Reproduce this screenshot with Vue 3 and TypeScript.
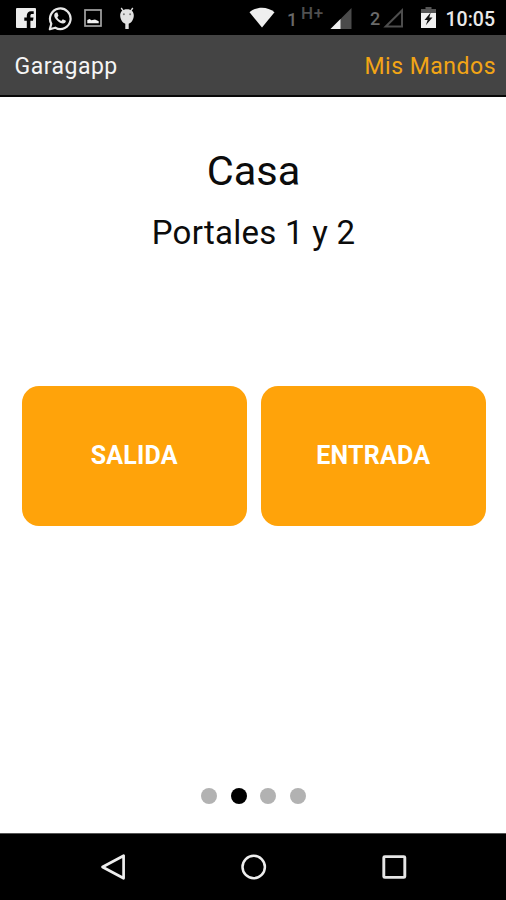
<script setup lang="ts">
import { ref } from 'vue'

const title = 'Casa'
const subtitle = 'Portales 1 y 2'
const actions: string[] = ['SALIDA', 'ENTRADA']
const pageCount = 4
const currentPage = ref(2)
</script>

<template>
  <div class="phone">
    <div class="status">
      <svg class="facebook" width="20" height="20" viewBox="0 0 20 20">
        <rect width="20" height="20" rx="1" fill="#ececec" />
        <path d="M10.800 20v-7.200H8.300V9.600h2.500V7.800c0-2.900 1.600-4.600 4.200-4.600h2.700v2.900h-1.600c-1.200 0-1.700.6-1.700 1.600v1.900h3.100l-.5 3.200h-2.600V20z" fill="#000" />
      </svg>
      <svg class="whatsapp" width="24" height="25" viewBox="0 0 24 25">
        <path d="M1.800 23.300l1.500-5.600A10.300 10.300 0 1 1 7.300 21.700z" fill="none" stroke="#e8e8e8" stroke-width="2.200" stroke-linejoin="round" />
        <path d="M8.300 6.500c-.8 0-2.100 1.100-2.100 2.900 0 2.800 5.200 8.100 8.800 8.100 1.500 0 3-1.100 2.900-2.700l-3.100-1.600-1.500 1.700c-1.700-.6-3.300-2-4-3.700l1.200-1.400-1.100-3.200z" fill="#e8e8e8" />
      </svg>
      <svg class="picture" width="18" height="18" viewBox="0 0 18 18">
        <rect x="1" y="1" width="16" height="16" fill="none" stroke="#a4a4a4" stroke-width="1.700" />
        <path d="M3.300 14.300v-3.400l2.300-.8 1.800 1.100 3.600-.8 3.700 1.900v2z" fill="#f2f2f2" />
      </svg>
      <svg class="debug" width="16" height="23" viewBox="0 0 16 23">
        <path d="M2.200 1l2.200 3.100M13.800 1l-2.200 3.100" stroke="#ddd" stroke-width="1.400" />
        <path d="M8 2.200c4.500 0 7 2.700 6.800 6.500C14.600 12.500 12.300 16 9.700 16.700V22H6.300v-5.300C3.700 16 1.400 12.500 1.200 8.700 1 4.900 3.500 2.200 8 2.200z" fill="#e2e2e2" />
        <circle cx="4.900" cy="7.300" r="1" fill="#777" />
        <circle cx="11.100" cy="7.300" r="1" fill="#777" />
      </svg>
      <svg class="wifi" width="26" height="21" viewBox="0 0 26 21">
        <path d="M.5 5.200C7.500-.9 18.500-.9 25.500 5.200L13 20.500z" fill="#efefef" />
      </svg>
      <span class="sim one">1</span>
      <span class="network">H+</span>
      <svg class="signal" width="22" height="21" viewBox="0 0 22 21">
        <path d="M21.500 0v21H.5z" fill="#4b4b4b" />
        <path d="M10.500 11v10H.5z" fill="#f0f0f0" />
      </svg>
      <span class="sim two">2</span>
      <svg class="empty" width="21" height="20" viewBox="0 0 21 20">
        <path d="M19 2.500v16H2.700z" fill="none" stroke="#4d4d4d" stroke-width="2" />
      </svg>
      <svg class="battery" width="15" height="21" viewBox="0 0 15 21">
        <path d="M4.500 0h6v2H15v4H0V2h4.500z" fill="#555" />
        <path d="M0 6h15v15H0z" fill="#f0f0f0" />
        <path d="M9.700 5.500L3.500 13h3.200L4.800 18.200l6.700-7.700H8.300z" fill="#111" />
      </svg>
      <time class="clock">10:05</time>
    </div>

    <header class="bar">
      <span class="brand">Garagapp</span>
      <a class="link">Mis Mandos</a>
    </header>

    <main class="content">
      <h1 class="title">{{ title }}</h1>
      <h2 class="subtitle">{{ subtitle }}</h2>
      <div class="actions">
        <button v-for="label in actions" :key="label" class="action" type="button">{{ label }}</button>
      </div>
      <div class="dots">
        <i v-for="n in pageCount" :key="n" class="dot" :class="{ active: n === currentPage }" @click="currentPage = n"></i>
      </div>
    </main>

    <nav class="nav">
      <svg width="26" height="28" viewBox="0 0 26 28">
        <path d="M23.600 2.700v22.600L2.500 14z" fill="none" stroke="#eee" stroke-width="2.700" stroke-linejoin="round" />
      </svg>
      <svg width="26" height="28" viewBox="0 0 26 28">
        <circle cx="12.700" cy="14" r="11.200" fill="none" stroke="#eee" stroke-width="2.500" />
      </svg>
      <svg width="26" height="28" viewBox="0 0 26 28">
        <rect x="2.800" y="3.600" width="21" height="20.800" rx="1" fill="none" stroke="#e6e6e6" stroke-width="2.900" />
      </svg>
    </nav>
  </div>
</template>

<style>
body {
  margin: 0;
  background: #fff;
}
</style>

<style scoped>
.phone {
  width: 506px;
  height: 900px;
  display: flex;
  flex-direction: column;
  overflow: hidden;
  font-family: Roboto, "Liberation Sans", sans-serif;
  background: #fff;
}
.status {
  height: 35px;
  flex: none;
  display: flex;
  align-items: flex-start;
  background: #000;
}
.status > * {
  flex: none;
}
.facebook { margin: 8px 0 0 16px; }
.whatsapp { margin: 6px 0 0 11.500px; }
.picture { margin: 9px 0 0 12.500px; }
.debug { margin: 7px 0 0 17px; }
.wifi { margin: 7px 0 0 114px; }
.sim {
  width: 12px;
  font-size: 18px;
  font-weight: 500;
  line-height: 20px;
  color: #696969;
}
.one { margin: 10px 0 0 12px; }
.network {
  width: 26px;
  margin: 4px 0 0 2px;
  font-size: 17px;
  font-weight: 500;
  line-height: 19px;
  letter-spacing: 0.6px;
  color: #505050;
}
.signal { margin: 8px 0 0 3px; }
.two { margin: 9px 0 0 18px; }
.empty { margin: 8px 0 0 1px; }
.battery { margin: 7px 0 0 17px; }
.clock {
  margin: 8px 0 0 9.500px;
  font-size: 19.500px;
  font-weight: 500;
  line-height: 23px;
  color: #e9e9e9;
}
.bar {
  height: 62px;
  flex: none;
  box-sizing: border-box;
  display: flex;
  justify-content: space-between;
  padding: 0 10px 0 14.500px;
  border-bottom: 2px solid #080808;
  background: #444;
  font-size: 23px;
  line-height: 63px;
}
.brand { color: #f5f5f5; letter-spacing: 0.5px; }
.link { color: #f2a516; letter-spacing: 0.5px; }
.content {
  flex: 1;
  display: flex;
  flex-direction: column;
  align-items: center;
}
.title, .subtitle {
  margin: 0;
  font-weight: 400;
  color: #0c0c0c;
}
.title {
  margin-top: 49px;
  padding-left: 1px;
  font-size: 41.500px;
  line-height: 50px;
}
.subtitle {
  margin-top: 17px;
  padding-left: 1px;
  font-size: 33px;
  line-height: 40px;
  letter-spacing: 0.25px;
}
.actions {
  display: flex;
  gap: 14px;
  margin-top: 133px;
  padding-left: 1.500px;
}
.action {
  width: 225px;
  height: 140px;
  padding: 0 0 2px;
  border: 0;
  border-radius: 17px;
  background: #ffa30a;
  color: #fff;
  font-family: inherit;
  font-size: 25px;
  font-weight: 700;
  letter-spacing: 0.2px;
}
.dots {
  display: flex;
  gap: 13.600px;
  margin-top: auto;
  margin-bottom: 29px;
  padding-left: 1px;
}
.dot {
  width: 16px;
  height: 16px;
  border-radius: 50%;
  background: #b2b2b2;
}
.dot.active { background: #000; }
.nav {
  height: 67px;
  flex: none;
  box-sizing: border-box;
  display: flex;
  justify-content: space-between;
  align-items: center;
  padding: 0 99px 0 100px;
  border-top: 1px solid #555;
  background: #000;
}
</style>
